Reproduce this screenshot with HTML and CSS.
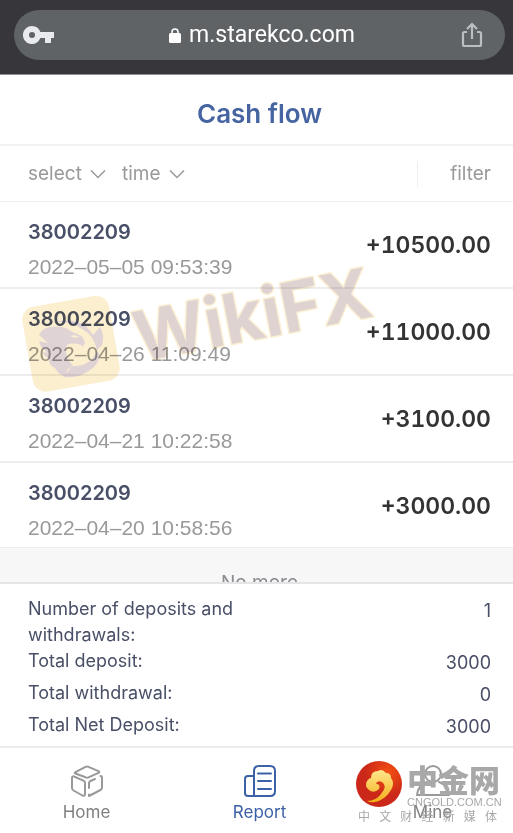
FILE: index.html
```html
<!DOCTYPE html>
<html lang="en">
<head>
<meta charset="utf-8">
<meta name="viewport" content="width=device-width, initial-scale=1">
<title>Cash flow</title>
<link rel="stylesheet" href="styles.css">
</head>
<body>
<div class="app">
  <header class="browser">
    <div class="address">
      <svg class="key" viewBox="0 0 32 18" aria-hidden="true"><path fill="#e8eaed" fill-rule="evenodd" d="M9 0a9 9 0 1 0 8.400 12H22v5h6v-5h3V6H17.400A9 9 0 0 0 9 0Zm0 6a3 3 0 1 1 0 6a3 3 0 0 1 0-6Z"/></svg>
      <div class="url">
        <svg class="lock" viewBox="0 0 12 15" aria-hidden="true"><rect y="5" width="12" height="10" rx="1.500" fill="#fff"/><path d="M3 6V4a3 3 0 0 1 6 0v2" fill="none" stroke="#fff" stroke-width="1.600"/></svg>
        <span>m.starekco.com</span>
      </div>
      <button class="share" type="button" aria-label="Share"><svg viewBox="0 0 22 26" aria-hidden="true"><path d="M6 10H3.500Q2 10 2 11.500V22.500Q2 24 3.500 24H18.500Q20 24 20 22.500V11.500Q20 10 18.500 10H16M11 17V2M6 7L11 2L16 7" fill="none" stroke="#bcbfc1" stroke-width="2.200"/></svg></button>
    </div>
  </header>
  <h1 class="title">Cash flow</h1>
  <div class="filters">
    <label class="picker"><select aria-label="select"><option>select</option></select><svg viewBox="0 0 16 10" aria-hidden="true"><path d="M1 1.500L8 8.500L15 1.500"/></svg></label>
    <label class="picker"><select aria-label="time"><option>time</option></select><svg viewBox="0 0 16 10" aria-hidden="true"><path d="M1 1.500L8 8.500L15 1.500"/></svg></label>
    <button class="filter" type="button">filter</button>
  </div>
  <main class="list">
    <article class="entry"><div><h2>38002209</h2><time>2022–05–05 09:53:39</time></div><strong>+10500.00</strong></article>
    <article class="entry"><div><h2>38002209</h2><time>2022–04–26 11:09:49</time></div><strong>+11000.00</strong></article>
    <article class="entry"><div><h2>38002209</h2><time>2022–04–21 10:22:58</time></div><strong>+3100.00</strong></article>
    <article class="entry"><div><h2>38002209</h2><time>2022–04–20 10:58:56</time></div><strong>+3000.00</strong></article>
    <p class="end">No more</p>
    <svg class="watermark" viewBox="0 0 380 140" aria-hidden="true">
      <rect x="13" y="42" width="88" height="86" rx="13" fill="#fcefcf" transform="rotate(-10 56 85)"/>
      <path fill="#e0d3d5" d="M25 76Q28 69 36 68Q50 66 58 73Q68 75 71 83L69 88Q66 83 54 85Q51 88 52 93Q53 102 59 106L53 111L54 118Q45 117 41 109Q34 106 35 99Q30 98 29 93L34 94Q26 89 25 82L34 84Z"/>
      <path fill="#e0d3d5" d="M41 63Q60 58 73 68L79 76L86 68Q91 76 88 86L83 91Q80 76 68 70Q58 62 41 63ZM83 92Q89 98 80 108Q67 120 49 118L58 107Q76 108 83 92Z"/>
      <path d="M56 77Q62 75 65 78Q60 80 56 77" fill="#fcefcf"/>
      <text class="brand" transform="translate(125 103) rotate(-11)">WikiFX</text>
    </svg>
  </main>
  <dl class="summary">
    <div><dt>Number of deposits and withdrawals:</dt><dd>1</dd></div>
    <div><dt>Total deposit:</dt><dd>3000</dd></div>
    <div><dt>Total withdrawal:</dt><dd>0</dd></div>
    <div><dt>Total Net Deposit:</dt><dd>3000</dd></div>
  </dl>
  <nav class="tabs">
    <a href="#home"><svg viewBox="0 0 34 34" aria-hidden="true"><path d="M5.500 8.200L15.500 2.800Q17 2 18.500 2.800L28.500 7.200Q30 8 28.500 8.900L18.500 13.300Q17 14 15.500 13.300L5.500 9.500Q4 9 5.500 8.200ZM4 12.500Q2 11.700 2 14V24Q2 25.500 3.500 26.500L12.500 31.500Q15 32.500 15 30V19Q15 17.500 13.500 16.700ZM19 30.500V32L29.500 26.500Q32 25.500 32 23.500V13.500Q32 12 30.500 12M19 24V19Q19 17.700 20.500 17L25 15"/></svg><span>Home</span></a>
    <a class="current" href="#report" aria-current="page"><svg viewBox="0 0 34 34" aria-hidden="true"><path d="M11 32V7Q11 2 16 2H27Q32 2 32 7V27Q32 32 27 32H5Q2 32 2 29V15Q2 12 5 12H11M15 9.500H28M15 17H28M15 25H28"/></svg><span>Report</span></a>
    <a href="#mine"><svg viewBox="0 0 34 34" aria-hidden="true"><circle cx="17" cy="10" r="8"/><path d="M11 18Q2 21 1 31H33Q32 21 23 18"/></svg><span>Mine</span></a>
    <div class="sponsor">
      <svg viewBox="0 0 46 46" aria-hidden="true"><defs><radialGradient id="red" cx="70%" cy="25%"><stop stop-color="#f45112"/><stop offset="1" stop-color="#cb2819"/></radialGradient><linearGradient id="gold" x2="0" y2="1"><stop stop-color="#ffe98e"/><stop offset="1" stop-color="#f5ae18"/></linearGradient></defs><circle cx="23" cy="23" r="23" fill="url(#red)"/><path fill="url(#gold)" d="M13 29Q8 25 11 20Q13 17 15 17Q15 10 22 10Q26 7 30 12Q35 12 35 17Q39 22 35 29Q29 39 19 41Q14 42 11 40Q20 40 25 33Q32 25 26 21Q21 19 20 23Q25 23 23 28Q18 33 13 29Z"/></svg>
      <div class="sponsor-name"><b lang="zh">中金网</b><span>CNGOLD.COM.CN</span></div>
      <div class="sponsor-line" lang="zh"><span>中</span><span>文</span><span>财</span><span>经</span><span>新</span><span>媒</span><span>体</span></div>
    </div>
  </nav>
</div>
</body>
</html>
```
FILE: styles.css
```css
* { box-sizing: border-box; }
body {
  margin: 0;
  overflow: hidden;
  background: #fff;
  font-family: Inter, "Liberation Sans", sans-serif;
  color: #484f67;
}
h1, h2, p, dl, dd { margin: 0; }
button, select {
  border: 0;
  padding: 0;
  background: none;
  font: inherit;
  color: inherit;
  appearance: none;
}
.app {
  display: flex;
  flex-direction: column;
  height: 100vh;
  margin-right: -6px;
}
.browser {
  padding: 10px 14px 14px;
  background: #36363b;
  border-bottom: 1px solid #929295;
}
.address {
  display: grid;
  grid-template-columns: 32px 1fr 22px;
  align-items: center;
  height: 50px;
  padding: 0 22px 0 9px;
  border-radius: 25px;
  background: #5f6366;
  color: #fff;
}
.key { width: 32px; height: 18px; }
.url {
  display: flex;
  justify-content: center;
  align-items: center;
  gap: 8px;
  padding-left: 8px;
  font: 23px/30px Roboto, sans-serif;
}
.lock { width: 12px; height: 15px; }
.share svg { display: block; width: 22px; height: 26px; }
.title {
  padding: 23px 0 15px;
  border-bottom: 2px solid #f2f2f3;
  font-size: 26px;
  line-height: 31px;
  font-weight: 600;
  text-align: center;
  color: #4564a1;
}
.filters {
  display: flex;
  align-items: center;
  gap: 16px;
  height: 56px;
  flex: none;
  padding: 0 28px;
  border-bottom: 1px solid #efeff0;
  font-size: 19px;
  line-height: 26px;
  color: #999;
}
.picker { display: flex; align-items: center; gap: 8px; }
.picker svg {
  width: 16px;
  height: 10px;
  fill: none;
  stroke: #999;
  stroke-width: 1.5;
}
.filter {
  margin-left: auto;
  padding-left: 32px;
  border-left: 1px solid #eee;
}
.list {
  position: relative;
  flex: 1;
  min-height: 0;
  overflow: hidden;
  background: #f7f7f7;
}
.entry {
  display: flex;
  justify-content: space-between;
  height: 87px;
  padding: 17px 28px 0;
  border-bottom: 2px solid #ededee;
  background: #fff;
}
.entry:nth-of-type(4) { height: 85px; border-bottom-width: 1px; }
.entry h2 {
  margin: 0 0 9px;
  font-size: 20px;
  line-height: 26px;
  font-weight: 600;
}
.entry time { display: block; font: 21px/26px "Liberation Sans", sans-serif; color: #999; }
.entry strong {
  padding-top: 12px;
  font-size: 23px;
  line-height: 28px;
  font-weight: 600;
  font-variant-numeric: tabular-nums;
  color: #333;
}
.end { padding-top: 22px; font-size: 19px; line-height: 26px; text-align: center; color: #8b8b90; }
.watermark {
  position: absolute;
  left: 14px;
  top: 57px;
  width: 380px;
  height: 140px;
  mix-blend-mode: multiply;
  pointer-events: none;
}
.brand {
  font: 700 69px Inter, sans-serif;
  fill: #dfd3d2;
  stroke: #fbf0d4;
  stroke-width: 3;
  stroke-linejoin: round;
  paint-order: stroke;
}
.summary {
  padding: 12px 28px 2px;
  border-top: 2px solid #e5e5e8;
  font-size: 18px;
  line-height: 26px;
}
.summary div { display: flex; justify-content: space-between; padding-bottom: 6px; }
.summary div:first-child { padding-bottom: 0; }
.summary dt { width: 50%; }
.summary dd { padding-top: 2px; height: 26px; }
.tabs {
  position: relative;
  display: grid;
  grid-template-columns: repeat(3, 1fr);
  height: 87px;
  flex: none;
  border-top: 2px solid #ebebec;
}
.tabs a {
  display: flex;
  flex-direction: column;
  align-items: center;
  gap: 2px;
  padding-top: 16px;
  font-size: 17px;
  line-height: 24px;
  text-decoration: none;
  color: #808080;
}
.tabs a svg {
  width: 34px;
  height: 34px;
  fill: none;
  stroke: #999;
  stroke-width: 2;
  stroke-linecap: round;
  stroke-linejoin: round;
}
.tabs .current { color: #3c61a6; }
.tabs .current svg { stroke: #3c61a6; }
.sponsor {
  position: absolute;
  right: 20px;
  bottom: 9px;
  display: grid;
  grid-template-columns: 46px 92px;
  column-gap: 5px;
  color: #a8a8a8;
  white-space: nowrap;
  pointer-events: none;
}
.sponsor > svg { width: 46px; height: 46px; }
.sponsor-name { display: flex; flex-direction: column; }
.sponsor b { font: 900 31px/36px "Noto Sans CJK SC", sans-serif; }
.sponsor-name span { font: 11px/11px "Liberation Sans", sans-serif; }
.sponsor-line {
  grid-column: 1 / -1;
  display: flex;
  justify-content: space-between;
  padding: 0 2px;
  font: 12px/16px "Noto Sans CJK SC", sans-serif;
}
```
